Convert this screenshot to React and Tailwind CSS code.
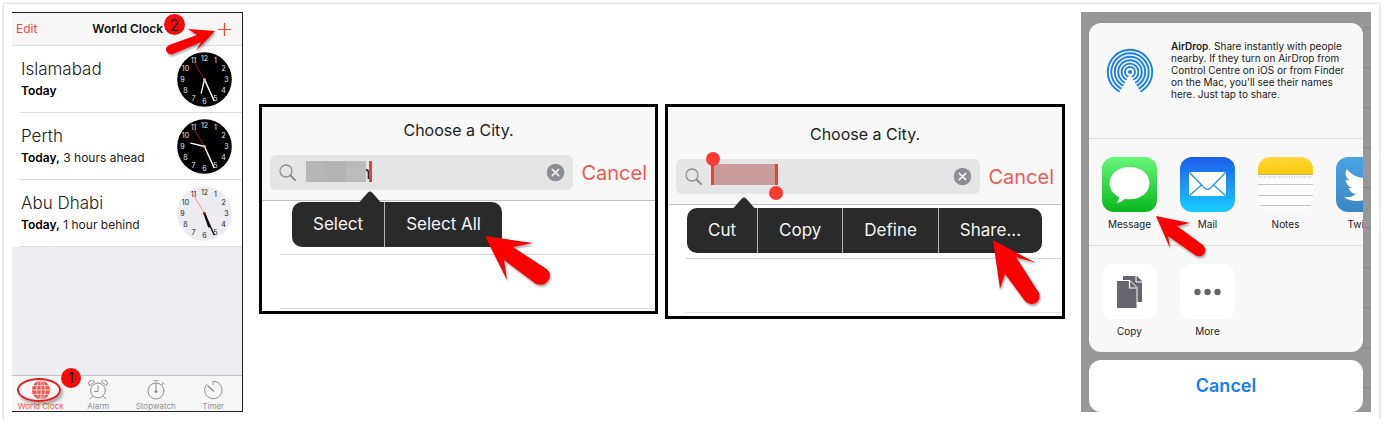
import React from 'react';

const CLOCKS = [
    { city: 'Islamabad', day: 'Today', offset: '', dark: true, hour: [-3.3, 13.7] },
    { city: 'Perth', day: 'Today,', offset: ' 3 hours ahead', dark: true, hour: [-13.7, -3.3] },
    { city: 'Abu Dhabi', day: 'Today,', offset: ' 1 hour behind', dark: false, hour: [4.5, 13] },
];

const ARROWS = {
    plus: 'M50 19 L23 17 L32 23 L4 33 Q-1 36 2 40 Q4 43 8 42 L36 30 L31 39 Z',
    selectAll: 'M2 2 L50 9 L30 13 L62 34 Q69 38 66 45 Q62 53 53 50 L21 26 L24 46 Z',
    share: 'M2 2 L45 25 L25 19 L48 55 Q50 61 45 65 Q39 68 34 63 L14 36 L9 51 Z',
    message: 'M2 2 L36 9 L23 12 L49 31 Q53 36 50 40 Q46 44 41 41 L14 22 L16 34 Z',
};

const Arrow = ({ name, className }) => (
    <svg className={`absolute z-20 overflow-visible pointer-events-none drop-shadow-[1px_2px_1px_rgba(0,0,0,0.35)] ${className}`} width="70" height="70" aria-hidden="true">
        <path d={ARROWS[name]} fill="#fb0000" />
    </svg>
);

const ClockFace = ({ dark, hour }) => {
    const ink = dark ? '#e8e8e8' : '#222';
    return (
        <svg className="shrink-0" width="55" height="55" viewBox="-27.5 -27.5 55 55" aria-hidden="true">
            <circle r="27.3" fill={dark ? '#000' : '#ececf1'} />
            {Array.from({ length: 12 }, (_, i) => {
                const a = ((i + 1) * Math.PI) / 6;
                return (
                    <text
                        key={i}
                        x={Math.sin(a) * 22}
                        y={-Math.cos(a) * 21.5 + 2.5}
                        fontSize="7"
                        textAnchor="middle"
                        fill={ink}
                    >
                        {i + 1}
                    </text>
                );
            })}
            <path d="M0 0 L-12 -20" stroke={dark ? '#a81c1c' : '#ff8a80'} strokeWidth="0.9" />
            <path d={`M0 0 L${hour[0]} ${hour[1]}`} stroke={dark ? '#fff' : '#111'} strokeWidth={dark ? 1.3 : 2.2} strokeLinecap="round" />
            <path d="M0 0 L9.5 21" stroke={dark ? '#fff' : '#111'} strokeWidth="1.5" strokeLinecap="round" />
            <circle r="1.5" fill={dark ? '#ff9a8a' : '#a01818'} />
        </svg>
    );
};

const GlobeIcon = () => (
    <svg width="20" height="20" viewBox="-10 -10 20 20" aria-hidden="true">
        <circle r="9.2" fill="#f2544a" />
        <g fill="none" stroke="#f9e5e3" strokeWidth="0.9">
            <ellipse rx="4.3" ry="9.2" />
            <path d="M0 -9.2V9.2M-9.2 0H9.2M-8 -4.3H8M-8 4.3H8" />
        </g>
    </svg>
);

const AlarmIcon = () => (
    <svg width="20" height="20" viewBox="-10 -10 20 20" fill="none" stroke="#929292" strokeLinecap="round" aria-hidden="true">
        <circle cy="0.5" r="7.4" />
        <path d="M0 -4V1.5H-3.5M-5.5 6.5L-8 9M5.5 6.5L8 9" />
        <path d="M-8.7 -4.5A3.2 3.2 0 0 1 -3.5 -8.7ZM8.7 -4.5A3.2 3.2 0 0 0 3.5 -8.7Z" />
    </svg>
);

const StopwatchIcon = () => (
    <svg width="20" height="20" viewBox="-10 -10 20 20" fill="none" stroke="#929292" strokeLinecap="round" aria-hidden="true">
        <circle cy="1" r="8" />
        <path d="M0 -7V1.5M-2 -9.3H2M6.5 -7.5L8 -6M5.8 -5L7 -6.5" />
        <circle cy="1.5" r="1" fill="#929292" />
    </svg>
);

const TimerIcon = () => (
    <svg width="20" height="20" viewBox="-10 -10 20 20" fill="none" stroke="#929292" strokeLinecap="round" aria-hidden="true">
        <path d="M-6 -6A8.7 8.7 0 1 0 0 -8.7V-5.5" />
        <path d="M-5 -4L0.5 1" strokeWidth="1.5" />
    </svg>
);

const TABS = [
    { label: 'World Clock', Icon: GlobeIcon, active: true },
    { label: 'Alarm', Icon: AlarmIcon },
    { label: 'Stopwatch', Icon: StopwatchIcon },
    { label: 'Timer', Icon: TimerIcon },
];

const WorldClock = () => (
    <section className="relative flex min-w-0 flex-col bg-[#ededf2] border-t border-r border-b border-[#222]">
        <header className="flex items-center justify-between h-[33px] pl-1 pr-[11px] bg-[#f6f6f6] border-b border-[#dcdcdc]">
            <button className="text-xs text-[#ef4a40]">Edit</button>
            <h2 className="text-xs font-semibold text-[#111]">World Clock</h2>
            <button aria-label="Add city">
                <svg width="13" height="13" viewBox="0 0 13 13" stroke="#f0483e" strokeWidth="1.2">
                    <path d="M6.5 0V13M0 6.5H13" />
                </svg>
            </button>
        </header>
        <span className="absolute right-[57px] top-px z-10 flex items-center justify-center size-[21px] rounded-full bg-[#f50b0b] text-base text-[#111]">
            2
        </span>
        <Arrow name="plus" className="right-[7px] -top-px" />

        <ul className="bg-white">
            {CLOCKS.map((c) => (
                <li key={c.city} className="pl-2">
                    <div className="flex items-center justify-between h-[67px] pl-px pr-2.5 border-b border-[#dedede]">
                        <div>
                            <p className="text-[17px] leading-6 font-light text-[#222]">{c.city}</p>
                            <p className="text-xs leading-5 text-[#222]">
                                <b className="font-semibold text-black">{c.day}</b>
                                {c.offset}
                            </p>
                        </div>
                        <ClockFace dark={c.dark} hour={c.hour} />
                    </div>
                </li>
            ))}
        </ul>

        <nav className="relative mt-auto grid grid-cols-4 h-9 bg-[#f6f6f6] border-t border-[#c4c4c4]">
            {TABS.map(({ label, Icon, active }) => (
                <button
                    key={label}
                    className={`flex flex-col items-center pt-1 text-[8px] leading-3 whitespace-nowrap ${active ? 'text-[#f2544a]' : 'text-[#929292]'}`}
                >
                    <Icon />
                    {label}
                </button>
            ))}
            <span className="absolute left-[5px] top-0.5 w-11 h-6 rounded-[50%] border-2 border-[#e02020] shadow-[2px_3px_3px_rgba(0,0,0,0.3)]" />
            <span className="absolute left-[49px] -top-2 flex items-center justify-center size-5 rounded-full bg-[#f50b0b] text-sm text-[#111]">
                1
            </span>
        </nav>
    </section>
);

const CitySearch = ({ id, selected, items, children }) => (
    <section className={`relative min-w-0 border-3 border-black bg-white ${selected ? 'h-[215px]' : 'h-[210px]'}`}>
        <header className={`px-2 pb-2.5 bg-[#f8f8f8] border-b border-[#c2c2c2] ${selected ? 'pt-4' : 'pt-3'}`}>
            <label htmlFor={id} className="block pb-3.5 text-base leading-[22px] text-center text-[#222]">
                Choose a City.
            </label>
            <div className="flex items-center gap-2">
                <div className="relative flex flex-1 min-w-0 items-center h-[35px] px-2 rounded-md bg-[#e4e6e6]">
                    <svg className="shrink-0" width="20" height="20" viewBox="0 0 20 20" fill="none" stroke="#8c8f92" strokeLinecap="round" aria-hidden="true">
                        <circle cx="8" cy="8" r="6" strokeWidth="1.3" />
                        <path d="M12.5 12.5L17 17" strokeWidth="2" />
                    </svg>
                    <input
                        id={id}
                        type="text"
                        defaultValue={selected ? '' : 'n'}
                        className="flex-1 min-w-0 pl-[62px] text-lg text-[#222] bg-transparent outline-none"
                    />
                    {selected ? (
                        <span className="absolute left-[35px] top-[5px] w-[67px] h-[21px] bg-[#c79c9b] border-x-3 border-[#e9413a]">
                            <span className="absolute -left-2 -top-3 size-[14px] rounded-full bg-[#fb3b30]" />
                            <span className="absolute -right-2 top-[22px] size-[14px] rounded-full bg-[#fb3b30]" />
                        </span>
                    ) : (
                        <span className="absolute left-9 top-1.5 flex w-[66px] h-[21px]">
                            <span className="w-5 bg-[#b5b7b7]" />
                            <span className="w-5 bg-[#b2b4b4]" />
                            <span className="w-5 bg-[#babcbc]" />
                            <span className="ml-auto w-[3px] bg-[#f03d33]" />
                        </span>
                    )}
                    <button aria-label="Clear text" className="shrink-0">
                        <svg width="19" height="19" viewBox="0 0 19 19">
                            <circle cx="9.5" cy="9.5" r="8.8" fill="#8b8e93" />
                            <path d="M6.3 6.3L12.7 12.7M12.7 6.3L6.3 12.7" stroke="#f0f0f0" strokeWidth="1.7" strokeLinecap="round" />
                        </svg>
                    </button>
                </div>
                <button className="text-xl text-[#ee5a50]">Cancel</button>
            </div>
        </header>
        <div className="ml-[18px] h-[54px] border-b border-[#d6d6d6]" />
        <div className="ml-[18px] h-[54px] border-b border-[#e2e2e2]" />

        <div className={`absolute ${selected ? 'left-[19px] top-[101px]' : 'left-[30px] top-[95px]'}`}>
            <svg
                className={`absolute -top-[11px] ${selected ? 'left-[45px]' : 'left-[66px]'}`}
                width="24"
                height="12"
                viewBox="0 0 24 12"
                aria-hidden="true"
            >
                <path d="M0 12Q3 10 5 7L10 1.5Q12 -0.5 14 1.5L19 7Q21 10 24 12Z" fill="#2a2a2a" />
            </svg>
            <div className="flex h-[45px] rounded-[10px] bg-[#2a2a2a] divide-x divide-[#b5b5b5]">
                {items.map((item) => (
                    <button key={item} className="px-[21px] text-[17px] whitespace-nowrap text-[#f4f4f4]">
                        {item}
                    </button>
                ))}
            </div>
        </div>
        {children}
    </section>
);

const AirDropIcon = () => (
    <svg className="shrink-0" width="48" height="48" viewBox="-24 -24 48 48" aria-hidden="true">
        <g fill="none" stroke="#1a80f0" strokeWidth="1.9">
            <circle r="22.2" />
            <circle r="18.7" />
            <circle r="15.2" />
            <circle r="11.8" />
            <circle r="8.4" />
            <circle r="5" />
        </g>
        <path d="M0 2L-14 26H14Z" fill="#f8f8f8" />
        <circle r="2" fill="#1a80f0" />
    </svg>
);

const MessageIcon = () => (
    <svg width="55" height="55" viewBox="0 0 55 55" aria-hidden="true">
        <defs>
            <linearGradient id="msg" x2="0" y2="1">
                <stop stopColor="#66f77a" />
                <stop offset="1" stopColor="#08b81c" />
            </linearGradient>
        </defs>
        <rect width="55" height="55" rx="12" fill="url(#msg)" />
        <path d="M27.5 10C16 10 7.5 17 7.5 26C7.5 32 11 37 17 40C17 42.5 16 44.5 14.5 46C18 45.8 20.5 44 22.5 42C39 44 47.5 35 47.5 26C47.5 17 39 10 27.5 10Z" fill="#fff" />
    </svg>
);

const MailIcon = () => (
    <svg width="55" height="55" viewBox="0 0 55 55" aria-hidden="true">
        <defs>
            <linearGradient id="mail" x2="0" y2="1">
                <stop stopColor="#1f5cec" />
                <stop offset="1" stopColor="#18cdfd" />
            </linearGradient>
        </defs>
        <rect width="55" height="55" rx="12" fill="url(#mail)" />
        <rect x="9" y="15" width="37" height="24" rx="1.5" fill="#fff" />
        <path d="M9.5 15.5L24.5 31Q27.5 34 30.5 31L45.5 15.5M9.5 38.5L21.5 28M45.5 38.5L33.5 28" fill="none" stroke="#2b93ee" strokeWidth="1.3" />
    </svg>
);

const NotesIcon = () => (
    <svg width="55" height="55" viewBox="0 0 55 55" aria-hidden="true">
        <defs>
            <linearGradient id="notes" x2="0" y2="1">
                <stop stopColor="#ffd93a" />
                <stop offset="1" stopColor="#fbc80c" />
            </linearGradient>
        </defs>
        <rect width="55" height="55" rx="12" fill="#fbfbfb" />
        <path d="M0 17V12A12 12 0 0 1 12 0H43A12 12 0 0 1 55 12V17Z" fill="url(#notes)" />
        <path d="M0 17.5H55" stroke="#b59b45" strokeWidth="0.8" />
        <path d="M1 20H54" stroke="#aaa" strokeDasharray="1 1.5" />
        <path d="M0 27.5H55M0 38.5H55M2 48.5H53" stroke="#c4c4c4" />
    </svg>
);

const TwitterIcon = () => (
    <svg width="55" height="55" viewBox="0 0 55 55" aria-hidden="true">
        <defs>
            <linearGradient id="tw" x2="0" y2="1">
                <stop stopColor="#4ba3e3" />
                <stop offset="1" stopColor="#3b86c4" />
            </linearGradient>
        </defs>
        <rect width="55" height="55" rx="12" fill="url(#tw)" />
        <path
            transform="translate(8 7) scale(1.7)"
            d="M23.95 4.57a10 10 0 0 1-2.82.77 4.96 4.96 0 0 0 2.16-2.72c-.95.56-2 .97-3.13 1.19a4.92 4.92 0 0 0-8.38 4.48C7.69 8.1 4.07 6.13 1.64 3.16a4.92 4.92 0 0 0 1.52 6.57 4.9 4.9 0 0 1-2.23-.61v.06a4.92 4.92 0 0 0 3.95 4.83 5 5 0 0 1-2.21.08 4.94 4.94 0 0 0 4.6 3.42A9.87 9.87 0 0 1 0 19.54a13.99 13.99 0 0 0 7.55 2.21c9.05 0 14-7.5 14-13.98l-.02-.64a9.94 9.94 0 0 0 2.42-2.56z"
            fill="#fff"
        />
    </svg>
);

const CopyIcon = () => (
    <svg width="55" height="55" viewBox="0 0 55 55" aria-hidden="true">
        <rect width="55" height="55" rx="12" fill="#fff" />
        <path d="M21 12H35L40 17V38H21Z" fill="#666670" />
        <path d="M34 12V18H40" fill="none" stroke="#fff" />
        <path d="M14.5 16.5H28L35 23.5V44.5H14.5Z" fill="#666670" stroke="#fff" />
        <path d="M27.5 17V24H34.5" fill="none" stroke="#fff" strokeWidth="1.2" />
    </svg>
);

const MoreIcon = () => (
    <svg width="55" height="55" viewBox="0 0 55 55" aria-hidden="true">
        <rect width="55" height="55" rx="12" fill="#fff" />
        <g fill="#666670">
            <circle cx="17.5" cy="28" r="3.2" />
            <circle cx="27.5" cy="28" r="3.2" />
            <circle cx="37.5" cy="28" r="3.2" />
        </g>
    </svg>
);

const ShareRow = ({ items }) => (
    <div className="flex gap-[23px] px-[13px] pt-[18px] pb-[15px] overflow-hidden">
        {items.map(({ label, Icon }) => (
            <button key={label} className="flex flex-col items-center w-[55px] shrink-0 gap-1.5 text-[10px] leading-3 text-[#222]">
                <Icon />
                {label}
            </button>
        ))}
    </div>
);

const ShareSheet = () => (
    <section className="relative flex min-w-0 bg-[#979797]">
        <div className="flex-1 min-w-0 pl-2 pt-[11px]">
            <div className="rounded-xl bg-[#f8f8f8] divide-y divide-[#dedede]">
                <div className="flex items-start gap-[17px] h-[116px] pl-[17px] pt-[17px] pr-3">
                    <div className="pt-2">
                        <AirDropIcon />
                    </div>
                    <p className="text-[10px] leading-3 text-[#222]">
                        <b className="font-semibold">AirDrop</b>. Share instantly with people nearby. If they turn on AirDrop from
                        Control Centre on iOS or from Finder on the Mac, you'll see their names here. Just tap to share.
                    </p>
                </div>
                <ShareRow
                    items={[
                        { label: 'Message', Icon: MessageIcon },
                        { label: 'Mail', Icon: MailIcon },
                        { label: 'Notes', Icon: NotesIcon },
                        { label: 'Twitter', Icon: TwitterIcon },
                    ]}
                />
                <ShareRow
                    items={[
                        { label: 'Copy', Icon: CopyIcon },
                        { label: 'More', Icon: MoreIcon },
                    ]}
                />
            </div>
            <button className="block w-full mt-2 h-[52px] rounded-xl bg-white text-lg font-semibold text-[#147efb]">Cancel</button>
        </div>
        <div className="w-2 bg-[repeating-linear-gradient(to_bottom,transparent_0_15px,#868686_15px_16px,transparent_16px_40px)]" />
        <Arrow name="message" className="left-[73px] top-[202px]" />
    </section>
);

export default function App() {
    return (
        <main className="p-1 pb-0 bg-white font-['Inter',sans-serif]">
            <div className="grid grid-cols-[231fr_806fr_290fr] gap-4 mr-px p-2 bg-white shadow-[0_0_3px_rgba(0,0,0,0.3)]">
                <WorldClock />
                <div className="grid min-w-0 grid-cols-[399fr_400fr] items-start gap-[7px] pt-23">
                    <CitySearch id="city-typed" items={['Select', 'Select All']}>
                        <Arrow name="selectAll" className="left-[221px] top-[127px]" />
                    </CitySearch>
                    <CitySearch id="city-selected" selected items={['Cut', 'Copy', 'Define', 'Share...']}>
                        <Arrow name="share" className="left-[323px] top-[131px]" />
                    </CitySearch>
                </div>
                <ShareSheet />
            </div>
        </main>
    );
}
